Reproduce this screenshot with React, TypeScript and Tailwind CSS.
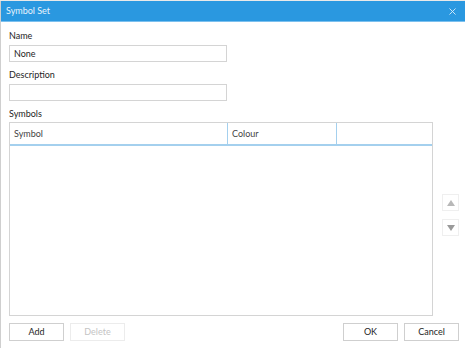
import { X } from "lucide-react";

const font = { fontFamily: "Lato, 'Open Sans', sans-serif" };

const Field = ({ label, value }: { label: string; value?: string }) => (
  <div className="flex flex-col">
    <span className="text-[9px] leading-[12px] text-[#1e1e1e]">{label}</span>
    <div className="mt-[3px] w-[218px] h-[17px] border border-[#d4d4d4] px-[4px] flex items-center text-[9px] text-[#1e1e1e]">
      {value}
    </div>
  </div>
);

const Btn = ({ label, disabled }: { label: string; disabled?: boolean }) => (
  <button
    className={`w-[55px] h-[18px] border text-[9px] flex items-center justify-center bg-white ${
      disabled ? "border-[#ececec] text-[#c4c4c4]" : "border-[#cfcfcf] text-[#1e1e1e]"
    }`}>
    {label}
  </button>
);

export default function App() {
  return (
    <div style={font} className="w-[465px] h-[348px] bg-[#e9e9e9] pt-px">
      <div className="h-[347px] bg-white border-l border-[#cfcfcf] flex flex-col">
        <div className="h-[21px] bg-[#2a98e0] border-b border-[#7cc0ee] flex items-center justify-between pl-[5px] pr-[7px]">
          <span className="text-[9px] text-[#e8f3fc]">Symbol Set</span>
          <X size={11} strokeWidth={2} className="text-[#d6ecfb]" />
        </div>
        <div className="flex-1 flex flex-col pl-[8px] pr-[6px] pt-[8px]">
          <Field label="Name" value="None" />
          <div className="mt-[7px]">
            <Field label="Description" />
          </div>
          <span className="mt-[7px] text-[9px] leading-[12px] text-[#1e1e1e]">Symbols</span>
          <div className="mt-[2px] flex items-start gap-[9px]">
            <div className="w-[424px] h-[194px] border border-[#d4d4d4] flex flex-col">
              <div className="h-[23px] flex border-b-2 border-[#a4d0ee] text-[9px] text-[#444]">
                <div className="w-[218px] border-r border-[#a4d0ee] flex items-center pl-[4px]">Symbol</div>
                <div className="w-[109px] border-r border-[#a4d0ee] flex items-center pl-[4px]">Colour</div>
                <div className="flex-1" />
              </div>
            </div>
            <div className="mt-[72px] flex flex-col gap-[8px]">
              <div className="w-[17px] h-[17px] border border-[#efefef] flex items-center justify-center">
                <span className="w-0 h-0 border-x-[4px] border-x-transparent border-b-[6px] border-b-[#b8b8b8]" />
              </div>
              <div className="w-[17px] h-[17px] border border-[#efefef] flex items-center justify-center">
                <span className="w-0 h-0 border-x-[4px] border-x-transparent border-t-[6px] border-t-[#9a9a9a]" />
              </div>
            </div>
          </div>
          <div className="mt-[7px] flex justify-between">
            <div className="flex gap-[6px]">
              <Btn label="Add" />
              <Btn label="Delete" disabled />
            </div>
            <div className="flex gap-[6px]">
              <Btn label="OK" />
              <Btn label="Cancel" />
            </div>
          </div>
        </div>
      </div>
    </div>
  );
}
